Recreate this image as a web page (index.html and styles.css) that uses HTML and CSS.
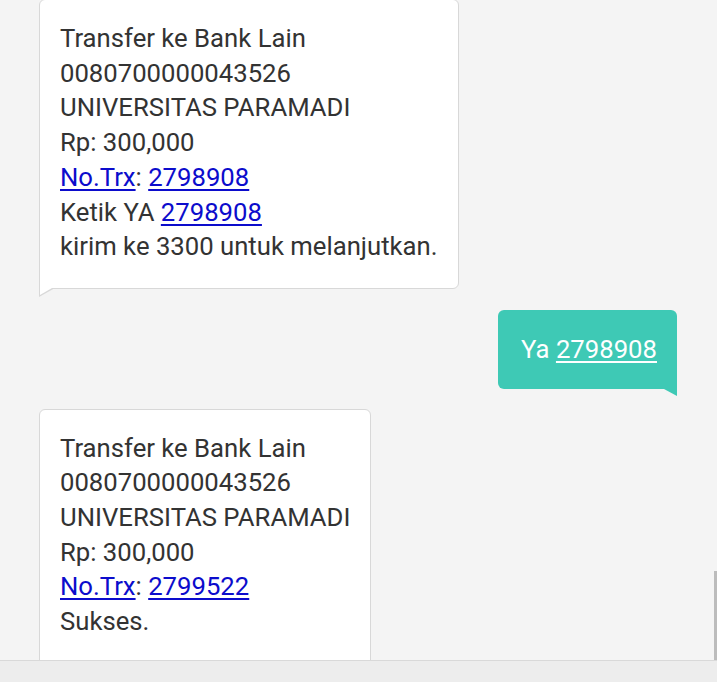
FILE: index.html
```html
<!DOCTYPE html>
<html lang="id">
<head>
<meta charset="utf-8">
<title>SMS</title>
<link rel="stylesheet" href="styles.css">
</head>
<body>
<div class="screen">
  <div class="thread">
    <div class="msg in">
      Transfer ke Bank Lain<br>
      0080700000043526<br>
      UNIVERSITAS PARAMADI<br>
      Rp: 300,000<br>
      <a href="#">No.Trx</a>: <a href="#">2798908</a><br>
      Ketik YA <a href="#">2798908</a><br>
      kirim ke 3300 untuk melanjutkan.
    </div>
    <div class="msg out">Ya <a href="#">2798908</a></div>
    <div class="msg in">
      Transfer ke Bank Lain<br>
      0080700000043526<br>
      UNIVERSITAS PARAMADI<br>
      Rp: 300,000<br>
      <a href="#">No.Trx</a>: <a href="#">2799522</a><br>
      Sukses.<br>
      &nbsp;
    </div>
    <div class="scrollbar"></div>
  </div>
  <div class="bottombar"></div>
</div>
</body>
</html>
```
FILE: styles.css
```css
html, body {
  margin: 0;
  padding: 0;
}
body {
  background: #f4f4f4;
  font-family: Roboto, "Liberation Sans", sans-serif;
}
.screen {
  width: 717px;
  height: 682px;
  display: flex;
  flex-direction: column;
  overflow: hidden;
}
.thread {
  flex: 1;
  position: relative;
  overflow: hidden;
  display: flex;
  flex-direction: column;
  align-items: flex-start;
  padding: 0 40px 0 39px;
  gap: 20px;
}
.msg {
  position: relative;
  font-size: 25.7px;
  line-height: 34.7px;
  color: #333333;
  border-radius: 6px;
  padding: 21px 20px 24px 20px;
  white-space: nowrap;
  flex: none;
}
.msg.in {
  background: #ffffff;
  border: 1px solid #d8d8d8;
  border-bottom-left-radius: 0;
}
.msg.in:first-child {
  margin-top: -1px;
}
.msg.in + .msg.out {
  margin-top: 1px;
}
.msg.in::before {
  content: "";
  position: absolute;
  left: -1px;
  top: 100%;
  width: 0;
  height: 0;
  border-top: 9px solid #d8d8d8;
  border-right: 16px solid transparent;
}
.msg.in::after {
  content: "";
  position: absolute;
  left: 0;
  top: 100%;
  width: 0;
  height: 0;
  border-top: 7px solid #ffffff;
  border-right: 12px solid transparent;
}
.msg a {
  color: #0c0ccc;
  text-decoration: underline;
  text-underline-offset: 3px;
}
.msg.out {
  align-self: flex-end;
  background: #3ec9b5;
  color: #ffffff;
  border-bottom-right-radius: 0;
  padding: 22px 20px 22px 23px;
}
.msg.out a {
  color: #ffffff;
}
.msg.out::after {
  content: "";
  position: absolute;
  right: 0;
  top: 100%;
  width: 0;
  height: 0;
  border-top: 7px solid #3ec9b5;
  border-left: 13px solid transparent;
}
.scrollbar {
  position: absolute;
  right: 0;
  bottom: 0;
  width: 3px;
  height: 89px;
  background: #bcbcbc;
}
.bottombar {
  flex: none;
  height: 21px;
  background: #ededed;
  border-top: 1px solid #d9d9d9;
}
```
